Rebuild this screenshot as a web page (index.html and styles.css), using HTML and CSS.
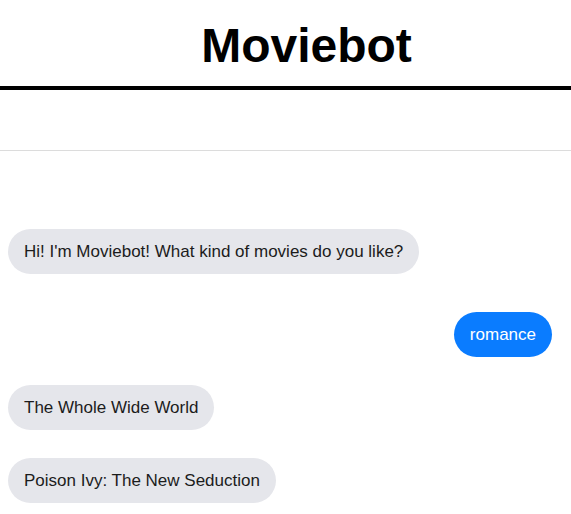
FILE: index.html
```html
<!DOCTYPE html>
<html>
<head>
<meta charset="utf-8">
<link rel="stylesheet" href="styles.css">
</head>
<body>
<header class="header">
  <h1 class="title">Moviebot</h1>
</header>
<div class="spacer"></div>
<main class="chat">
  <div class="msg bot">Hi! I'm Moviebot! What kind of movies do you like?</div>
  <div class="msg user">romance</div>
  <div class="msg bot">The Whole Wide World</div>
  <div class="msg bot">Poison Ivy: The New Seduction</div>
</main>
</body>
</html>
```
FILE: styles.css
```css
html, body {
  margin: 0;
  padding: 0;
  background: #fff;
}
body {
  font-family: "Liberation Sans", Arial, sans-serif;
  overflow: hidden;
}
.header {
  padding-top: 18px;
  padding-bottom: 13px;
  border-bottom: 4px solid #000;
  text-align: center;
}
.title {
  margin: 0;
  padding-left: 42px;
  font-size: 48px;
  line-height: 55px;
  font-weight: bold;
  color: #000;
}
.spacer {
  height: 60px;
  border-bottom: 1px solid #dcdcdc;
}
.chat {
  display: flex;
  flex-direction: column;
  align-items: flex-start;
  gap: 28px;
  padding: 78px 19px 0 8px;
}
.msg {
  font-size: 17px;
  line-height: 19px;
  padding: 13px 16px;
  border-radius: 23px;
  background: #e5e6eb;
  color: #1c1c1c;
}
.msg.user {
  align-self: flex-end;
  background: #0a7cff;
  color: #fff;
  margin-top: 10px;
}
```
